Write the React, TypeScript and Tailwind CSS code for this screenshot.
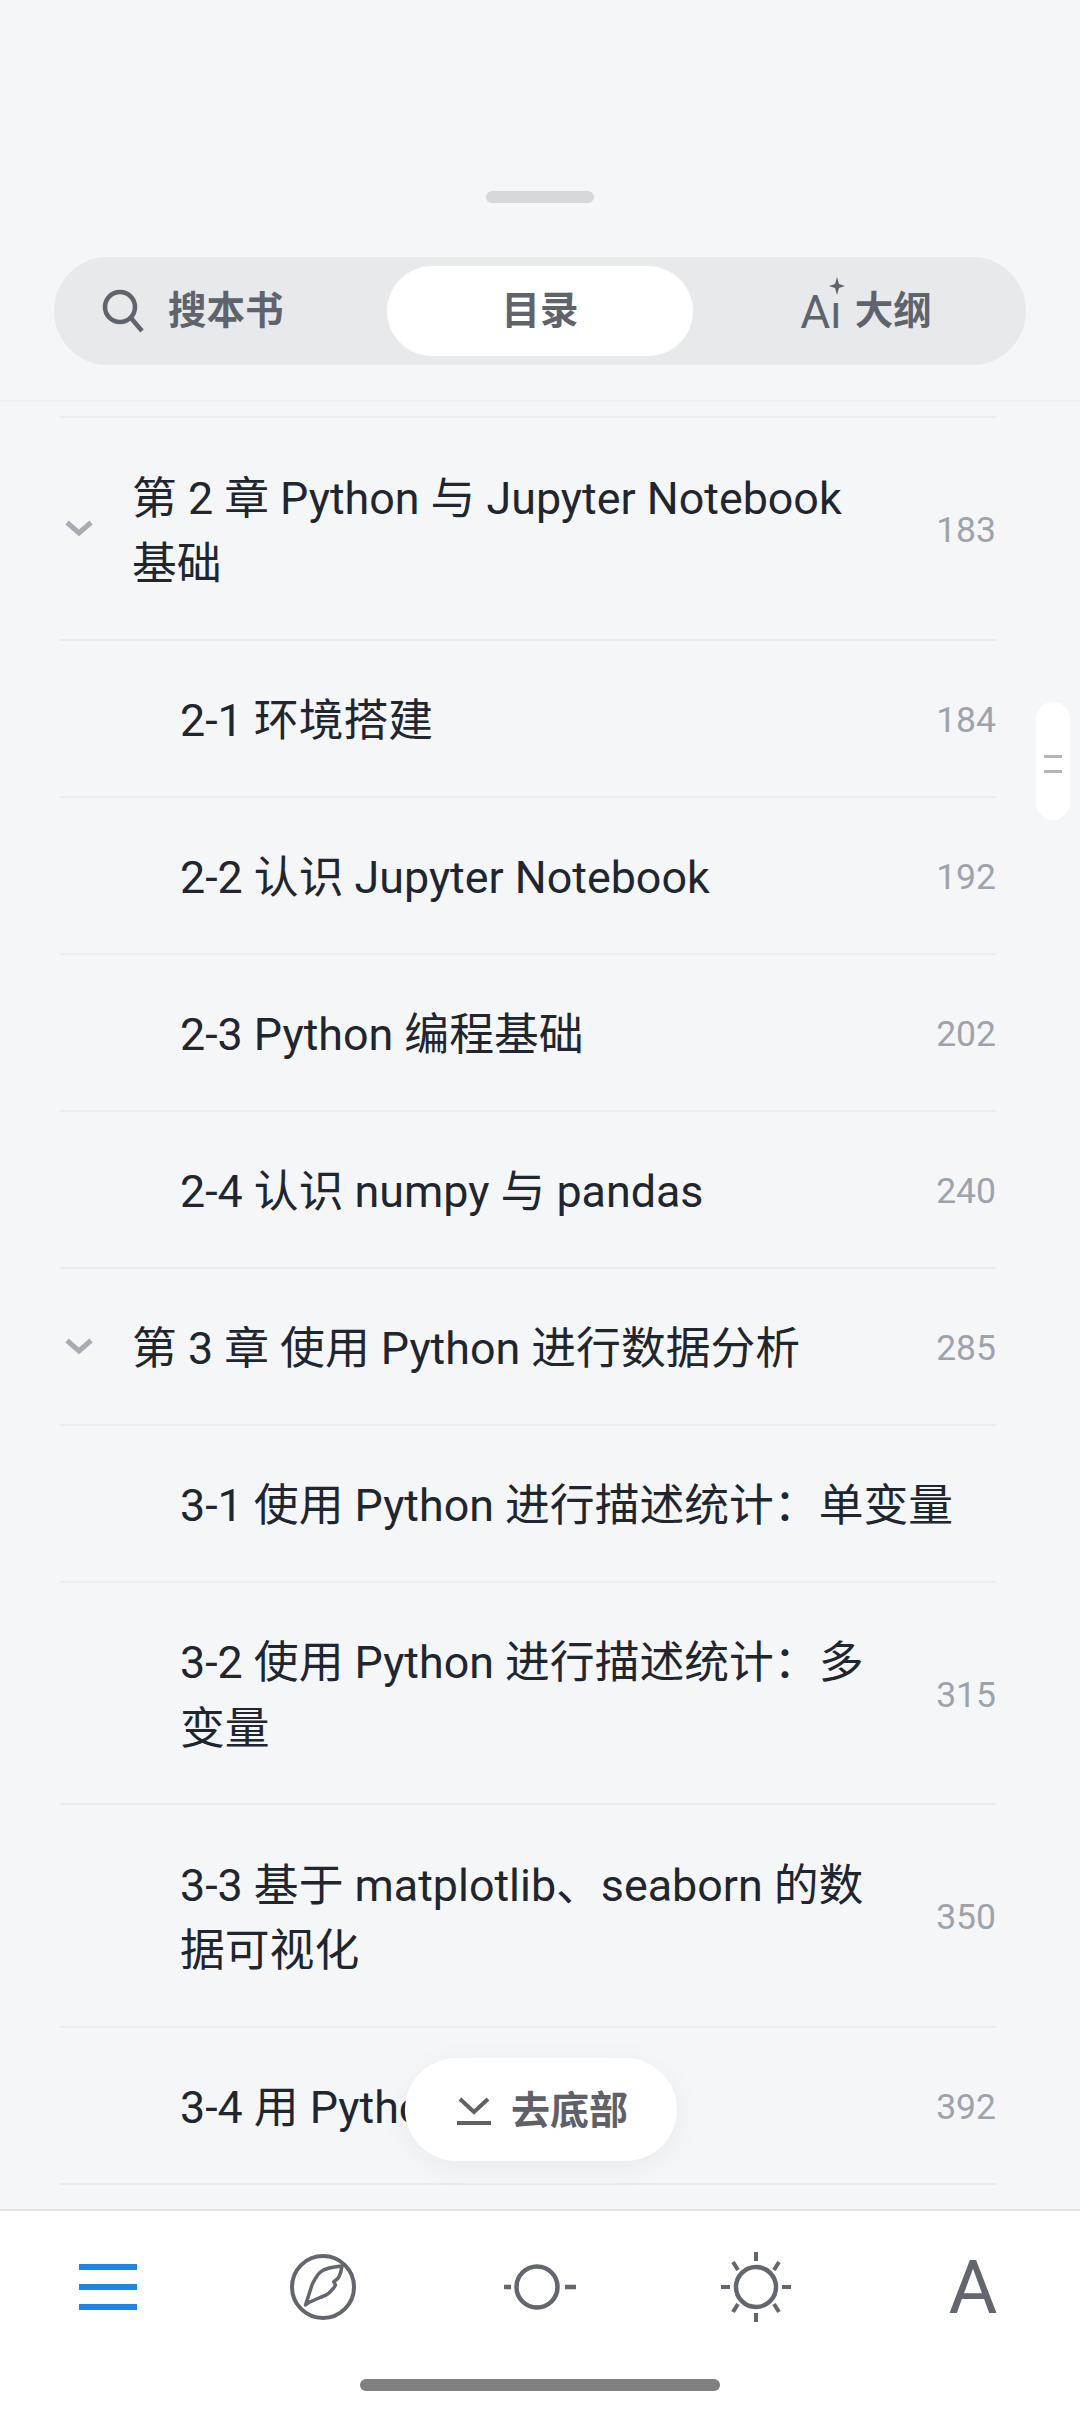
import React from "react";

const fontStack = "font-['Roboto','Noto_Sans_CJK_SC',sans-serif]";

interface TocRow {
  title: string;
  page?: number;
  chapter?: boolean;
}

const rows: TocRow[] = [
  { title: "第 2 章 Python 与 Jupyter Notebook 基础", page: 183, chapter: true },
  { title: "2-1 环境搭建", page: 184 },
  { title: "2-2 认识 Jupyter Notebook", page: 192 },
  { title: "2-3 Python 编程基础", page: 202 },
  { title: "2-4 认识 numpy 与 pandas", page: 240 },
  { title: "第 3 章 使用 Python 进行数据分析", page: 285, chapter: true },
  { title: "3-1 使用 Python 进行描述统计：单变量" },
  { title: "3-2 使用 Python 进行描述统计：多变量", page: 315 },
  { title: "3-3 基于 matplotlib、seaborn 的数据可视化", page: 350 },
  { title: "3-4 用 Python", page: 392 },
];

const Row: React.FC<TocRow> = ({ title, page, chapter }) => (
  <div className="relative flex items-center border-b-2 border-[#eaecef] pt-[47.5px] pb-[42px]">
    {chapter && (
      <svg className="absolute left-[5px] top-1/2 -mt-[8px]" width="28" height="16" viewBox="0 0 28 16" fill="none">
        <path d="M2 2.5 L14 13 L26 2.5" stroke="#a9adb3" strokeWidth="5" />
      </svg>
    )}
    <div className={`min-w-0 flex-1 text-[44.8px] leading-[65.5px] text-[#20252e] ${chapter ? "pl-[72px]" : "pl-[120px]"}`}>
      {title}
    </div>
    {page && <div className="w-[116px] shrink-0 text-right text-[35.5px] leading-[65.5px] text-[#9ea3ab]">{page}</div>}
  </div>
);

const SearchIcon = () => (
  <svg width="42" height="44" viewBox="0 0 42 44" fill="none" stroke="#5f636c" strokeWidth="4.5">
    <circle cx="18" cy="18" r="15" />
    <path d="M29 29 L40 42" />
  </svg>
);

const SparkleDot = () => (
  <svg className="absolute -top-[12px] right-[-3px]" width="16" height="18" viewBox="0 0 16 18" fill="#5f636c">
    <path d="M8 0 L10 7 L16 9 L10 11 L8 18 L6 11 L0 9 L6 7 Z" />
  </svg>
);

const CompassIcon = () => (
  <svg width="68" height="68" viewBox="0 0 68 68" fill="none" stroke="#63666e">
    <circle cx="34" cy="34" r="31" strokeWidth="4" />
    <path
      d="M53 13 C43 14 36 15 31.5 19 C27 23 25 28 23 32 C21 38 19 45 16.5 52 C19 50 20 49 21.5 48.7 C25 47 28 46 31.5 44.3 C35 43 38 42 40 40 C43 37 45 35 46.5 32 L44.8 28.7 C47 27 49 26 50 23.7 C52 20 52.5 16 53 13 Z"
      strokeWidth="3.5"
      strokeLinejoin="round"
    />
  </svg>
);

const DimIcon = () => (
  <svg width="72" height="48" viewBox="0 0 72 48" fill="none" stroke="#63666e" strokeWidth="4.5">
    <circle cx="33" cy="24" r="20.5" />
    <path d="M0 24 H7" />
    <path d="M61 24 H72" />
  </svg>
);

const SunIcon = () => (
  <svg width="72" height="72" viewBox="0 0 72 72" fill="none" stroke="#63666e" strokeWidth="4">
    <circle cx="36" cy="36" r="20" strokeWidth="4.5" />
    <path d="M36 1 V10 M36 62 V71 M1 36 H10 M62 36 H71 M13 11 L18 19 M59 11 L54 19 M13 61 L18 53 M59 61 L54 53" />
  </svg>
);

const App: React.FC = () => {
  return (
    <div className={`relative flex h-[2412px] w-[1080px] flex-col overflow-hidden bg-[#f4f6f8] ${fontStack}`}>
      {/* sheet header */}
      <div className="shrink-0 border-b-2 border-[#eceef0] pt-[191px] pb-[35px]">
        <div className="mx-auto h-[12px] w-[108px] rounded-[6px] bg-[#d6d8da]" />
        <div className="mx-[54px] mt-[54px] flex h-[108px] items-center rounded-full bg-[#e7e9eb] px-[9px] text-[38.5px] leading-none font-bold text-[#5f636c]">
          <div className="flex w-[324px] items-center gap-[24px] pl-[39px]">
            <SearchIcon />
            <span>搜本书</span>
          </div>
          <div className="flex h-[90px] w-[306px] items-center justify-center rounded-full bg-white">目录</div>
          <div className="flex flex-1 items-center justify-center gap-[13px] pl-[22px]">
            <span className="relative mt-[2px] text-[46px] leading-none font-normal">
              Aı
              <SparkleDot />
            </span>
            <span>大纲</span>
          </div>
        </div>
      </div>

      {/* table of contents */}
      <div className="min-h-0 flex-1 overflow-hidden px-[60px] pr-[84px]">
        <div className="h-[16px] border-b-2 border-[#eaecef]" />
        {rows.map((row) => (
          <Row key={row.title} {...row} />
        ))}
      </div>

      {/* bottom toolbar */}
      <div className="grid h-[203px] shrink-0 grid-cols-5 border-t-2 border-[#e4e5e7] bg-white pb-[127px] pt-[10px]">
        <div className="flex h-[132px] flex-col items-center justify-center gap-[14px]">
          <div className="h-[6px] w-[58px] bg-[#1e84e6]" />
          <div className="h-[6px] w-[58px] bg-[#1e84e6]" />
          <div className="h-[6px] w-[58px] bg-[#1e84e6]" />
        </div>
        <div className="flex h-[132px] items-center justify-center pr-[3px]">
          <CompassIcon />
        </div>
        <div className="flex h-[132px] items-center justify-center">
          <DimIcon />
        </div>
        <div className="flex h-[132px] items-center justify-center">
          <SunIcon />
        </div>
        <div className="flex h-[132px] items-center justify-center pl-[2px] text-[75px] leading-none font-normal text-[#63666e]">A</div>
      </div>

      {/* scroll thumb */}
      <div className="absolute left-[1036px] top-[702px] flex h-[118px] w-[34px] flex-col items-center justify-center gap-[12px] rounded-[17px] bg-white pt-[6px]">
        <div className="h-[3px] w-[18px] bg-[#b5b5b5]" />
        <div className="h-[3px] w-[18px] bg-[#b5b5b5]" />
      </div>

      {/* jump to bottom */}
      <div className="absolute left-[405px] top-[2058px] flex h-[103px] w-[272px] items-center justify-center gap-[20px] rounded-full bg-white pl-[3px] pt-[3px] text-[39px] font-bold text-[#5f6068] shadow-[0_6px_30px_rgba(0,0,0,0.05)]">
        <svg width="34" height="28" viewBox="0 0 34 28" fill="none" stroke="#5f6068" strokeWidth="4">
          <path d="M3 2 L17 15 L31 2" />
          <path d="M0 26 H34" />
        </svg>
        <span>去底部</span>
      </div>

      {/* home indicator */}
      <div className="absolute left-[360px] top-[2379px] h-[12px] w-[360px] rounded-[6px] bg-[#808080]" />
    </div>
  );
};

export default App;
